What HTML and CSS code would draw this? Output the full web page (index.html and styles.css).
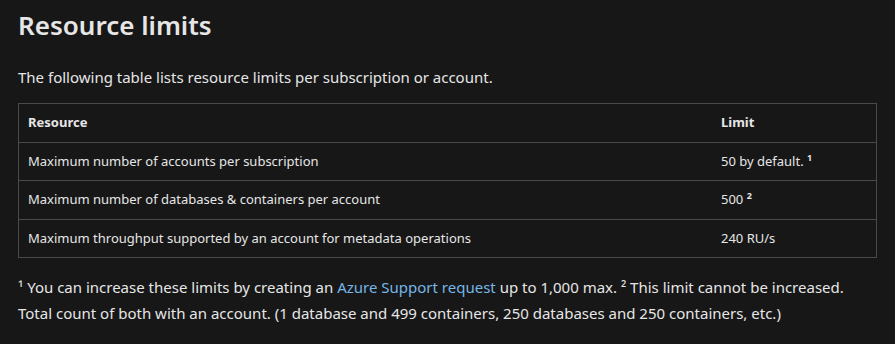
FILE: index.html
```html
<!DOCTYPE html>
<html lang="en">
<head>
    <meta charset="UTF-8">
    <meta name="viewport" content="width=device-width, initial-scale=1.0">
    <title>Resource limits</title>
    <link rel="stylesheet" href="styles.css">
</head>
<body>
    <div class="content">
        <h1>Resource limits</h1>
        <p class="intro">The following table lists resource limits per subscription or account.</p>

        <table class="limits">
            <thead>
                <tr>
                    <th>Resource</th>
                    <th class="limit-col">Limit</th>
                </tr>
            </thead>
            <tbody>
                <tr>
                    <td>Maximum number of accounts per subscription</td>
                    <td>50 by default. <sup>1</sup></td>
                </tr>
                <tr>
                    <td>Maximum number of databases &amp; containers per account</td>
                    <td>500 <sup>2</sup></td>
                </tr>
                <tr>
                    <td>Maximum throughput supported by an account for metadata operations</td>
                    <td>240 RU/s</td>
                </tr>
            </tbody>
        </table>

        <p class="notes">¹ You can increase these limits by creating an <a href="#">Azure Support request</a> up to 1,000 max. ² This limit cannot be increased. Total count of both with an account. (1 database and 499 containers, 250 databases and 250 containers, etc.)</p>
    </div>
</body>
</html>
```

FILE: styles.css
```css
body {
    margin: 0;
    background-color: #171717;
    color: #e6e6e6;
    font-family: "Noto Sans", "Open Sans", sans-serif;
}
.content {
    padding: 0 18px;
}
h1 {
    font-size: 26px;
    font-weight: 600;
    line-height: 36px;
    margin: 7px 0 0 0;
}
.intro {
    font-size: 15px;
    line-height: 26px;
    margin: 21px 0 13px 0;
}
.limits {
    width: 100%;
    border-collapse: collapse;
    border: 1px solid #4a4a4a;
    font-size: 13px;
}
.limits th,
.limits td {
    text-align: left;
    padding: 8px 9px 9px 9px;
    line-height: 20.5px;
    border-top: 1px solid #4a4a4a;
}
.limits th {
    font-weight: 700;
}
.limits .limit-col {
    width: 146px;
}
.limits sup {
    font-size: 9px;
    font-weight: 700;
    line-height: 0;
}
.notes {
    font-size: 15px;
    line-height: 26px;
    margin: 16px 0 0 0;
}
.notes a {
    color: #75b6e7;
    text-decoration: none;
}
```
